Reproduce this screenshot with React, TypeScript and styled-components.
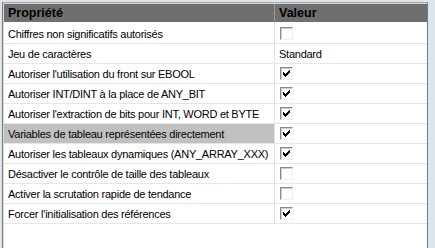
import React from 'react'
import styled, { createGlobalStyle } from 'styled-components'

type Row = {
  label: string
  value: boolean | string
  selected?: boolean
}

const rows: Row[] = [
  { label: 'Chiffres non significatifs autorisés', value: false },
  { label: 'Jeu de caractères', value: 'Standard' },
  { label: "Autoriser l'utilisation du front sur EBOOL", value: true },
  { label: 'Autoriser INT/DINT à la place de ANY_BIT', value: true },
  { label: "Autoriser l'extraction de bits pour INT, WORD et BYTE", value: true },
  { label: 'Variables de tableau représentées directement', value: true, selected: true },
  { label: 'Autoriser les tableaux dynamiques (ANY_ARRAY_XXX)', value: true },
  { label: 'Désactiver le contrôle de taille des tableaux', value: false },
  { label: 'Activer la scrutation rapide de tendance', value: false },
  { label: "Forcer l'initialisation des références", value: true },
]

// classic 7x7 pixel check mark
const checkPixels = [
  '......X',
  '.....XX',
  'X...XXX',
  'XX.XXX.',
  'XXXXX..',
  '.XXX...',
  '..X....',
]
const checkPath = checkPixels
  .flatMap((line, y) =>
    line.split('').map((c, x) => (c === 'X' ? `M${x} ${y}h1v1h-1z` : ''))
  )
  .join('')

const GlobalStyle = createGlobalStyle`
  html, body {
    margin: 0;
    padding: 0;
    background: #dde5ec;
    overflow: hidden;
  }
  body {
    font-family: Tahoma, "Liberation Sans", Arial, sans-serif;
    font-size: 11px;
    letter-spacing: -0.25px;
    color: #000;
  }
`

const Frame = styled.div`
  margin: 2px 0 0 2px;
  width: 426px;
  height: 246px;
  overflow: hidden;
  border-top: 1px solid #a6a6a6;
  border-left: 1px solid #7a7a7a;
  border-right: 1px solid #7a7a7a;
  background: #d8d8d8;
  padding: 1px 0 0 1px;
  box-sizing: border-box;
`

const Grid = styled.div`
  display: grid;
  grid-template-columns: 271px 152px;
  grid-auto-rows: 20px;
  background: #fff;
  height: 100%;
  align-content: start;
`

const HeaderCell = styled.div<{ $last?: boolean }>`
  height: 18px;
  background: #6f6f6f;
  font-weight: bold;
  font-size: 12.5px;
  letter-spacing: 0;
  padding-left: 4px;
  display: flex;
  align-items: center;
  border-right: ${(p) => (p.$last ? 'none' : '1px solid #9a9a9a')};
  border-bottom: 2px solid #fff;
`

const LabelCell = styled.div<{ $selected?: boolean }>`
  background: ${(p) => (p.$selected ? '#c0c0c0' : '#fff')};
  padding-left: 4px;
  display: flex;
  align-items: center;
  border-right: 1px solid #e2e2e2;
  border-bottom: 1px solid #e6e6e6;
  white-space: nowrap;
  overflow: hidden;
`

const ValueCell = styled.div`
  padding-left: 4px;
  display: flex;
  align-items: center;
  border-bottom: 1px solid #e6e6e6;
  white-space: nowrap;
`

const Box = styled.span`
  width: 11px;
  height: 11px;
  border-top: 1px solid #8a8a8a;
  border-left: 1px solid #8a8a8a;
  border-right: 1px solid #f0f0f0;
  border-bottom: 1px solid #f0f0f0;
  box-shadow: inset 1px 1px 0 #cfcfcf;
  background: #fff;
  display: flex;
  align-items: center;
  justify-content: center;
  margin-left: 1px;
`

const Check = ({ on }: { on: boolean }) => (
  <Box>
    {on && (
      <svg width="7" height="7" viewBox="0 0 7 7" shapeRendering="crispEdges">
        <path d={checkPath} fill="#000" />
      </svg>
    )}
  </Box>
)

export default function App() {
  return (
    <>
      <GlobalStyle />
      <Frame>
        <Grid>
          <HeaderCell>Propriété</HeaderCell>
          <HeaderCell $last>Valeur</HeaderCell>
          {rows.map((r) => (
            <React.Fragment key={r.label}>
              <LabelCell $selected={r.selected}>{r.label}</LabelCell>
              <ValueCell>
                {typeof r.value === 'string' ? r.value : <Check on={r.value} />}
              </ValueCell>
            </React.Fragment>
          ))}
        </Grid>
      </Frame>
    </>
  )
}
